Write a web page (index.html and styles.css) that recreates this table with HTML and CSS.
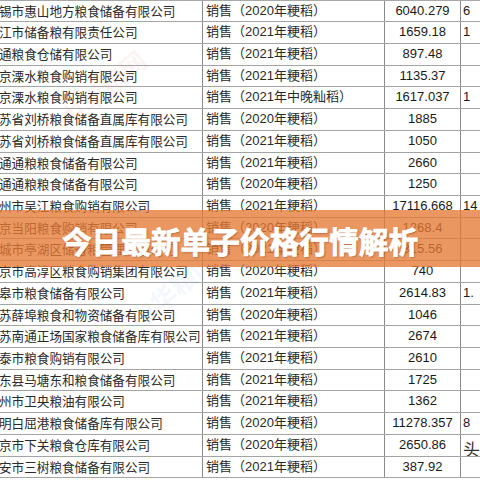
FILE: index.html
```html
<!DOCTYPE html>
<html lang="zh-CN">
<head>
<meta charset="utf-8">
<title>今日最新单子价格行情解析</title>
<link rel="stylesheet" href="styles.css">
</head>
<body>
<div class="page">
  <div class="sheet">
    <div class="row"><div class="c1">锡市惠山地方粮食储备有限公司</div><div class="c2">销售（2020年粳稻）</div><div class="c3">6040.279</div><div class="c4">6</div></div>
    <div class="row"><div class="c1">江市储备粮有限责任公司</div><div class="c2">销售（2021年粳稻）</div><div class="c3">1659.18</div><div class="c4">1</div></div>
    <div class="row"><div class="c1">通粮食仓储有限公司</div><div class="c2">销售（2021年粳稻）</div><div class="c3">897.48</div><div class="c4"></div></div>
    <div class="row"><div class="c1">京溧水粮食购销有限公司</div><div class="c2">销售（2021年粳稻）</div><div class="c3">1135.37</div><div class="c4"></div></div>
    <div class="row"><div class="c1">京溧水粮食购销有限公司</div><div class="c2">销售（2021年中晚籼稻）</div><div class="c3">1617.037</div><div class="c4">1</div></div>
    <div class="row"><div class="c1">苏省刘桥粮食储备直属库有限公司</div><div class="c2">销售（2020年粳稻）</div><div class="c3">1885</div><div class="c4"></div></div>
    <div class="row"><div class="c1">苏省刘桥粮食储备直属库有限公司</div><div class="c2">销售（2021年粳稻）</div><div class="c3">1050</div><div class="c4"></div></div>
    <div class="row"><div class="c1">通通粮粮食储备有限公司</div><div class="c2">销售（2021年粳稻）</div><div class="c3">2660</div><div class="c4"></div></div>
    <div class="row"><div class="c1">通通粮粮食储备有限公司</div><div class="c2">销售（2020年粳稻）</div><div class="c3">1250</div><div class="c4"></div></div>
    <div class="row"><div class="c1">州市吴江粮食购销有限公司</div><div class="c2">销售（2021年粳稻）</div><div class="c3">17116.668</div><div class="c4">14</div></div>
    <div class="row"><div class="c1">京当阳粮食购销有限公司</div><div class="c2">销售（2020年粳稻）</div><div class="c3">1268.4</div><div class="c4"></div></div>
    <div class="row"><div class="c1">城市亭湖区储备粮管理有限公司</div><div class="c2">销售（2021年粳稻）</div><div class="c3">315.56</div><div class="c4"></div></div>
    <div class="row"><div class="c1">京市高淳区粮食购销集团有限公司</div><div class="c2">销售（2020年粳稻）</div><div class="c3">740</div><div class="c4"></div></div>
    <div class="row"><div class="c1">皋市粮食储备有限公司</div><div class="c2">销售（2021年粳稻）</div><div class="c3">2614.83</div><div class="c4">1.</div></div>
    <div class="row"><div class="c1">苏薛埠粮食和物资储备有限公司</div><div class="c2">销售（2020年粳稻）</div><div class="c3">1046</div><div class="c4"></div></div>
    <div class="row"><div class="c1">苏南通正场国家粮食储备库有限公司</div><div class="c2">销售（2021年粳稻）</div><div class="c3">2674</div><div class="c4"></div></div>
    <div class="row"><div class="c1">泰市粮食购销有限公司</div><div class="c2">销售（2021年粳稻）</div><div class="c3">2610</div><div class="c4"></div></div>
    <div class="row"><div class="c1">东县马塘东和粮食储备有限公司</div><div class="c2">销售（2021年粳稻）</div><div class="c3">1725</div><div class="c4"></div></div>
    <div class="row"><div class="c1">州市卫央粮油有限公司</div><div class="c2">销售（2021年粳稻）</div><div class="c3">1362</div><div class="c4"></div></div>
    <div class="row"><div class="c1">明白屈港粮食储备库有限公司</div><div class="c2">销售（2020年粳稻）</div><div class="c3">11278.357</div><div class="c4">8</div></div>
    <div class="row"><div class="c1">京市下关粮食仓库有限公司</div><div class="c2">销售（2020年粳稻）</div><div class="c3">2650.86</div><div class="c4"><span class="mark">头条</span></div></div>
    <div class="row"><div class="c1">安市三树粮食储备有限公司</div><div class="c2">销售（2021年粳稻）</div><div class="c3">387.92</div><div class="c4"></div></div>
  </div>
  <div class="wm wm1">中华粮网</div>
  <div class="wm wm2">中华粮网</div>
  <div class="banner"><h1 class="title">今日最新单子价格行情解析</h1></div>
</div>
</body>
</html>
```
FILE: styles.css
```css
html, body {
  margin: 0;
  padding: 0;
  background: #ffffff;
}
body {
  width: 480px;
  height: 480px;
  overflow: hidden;
}
.page {
  position: relative;
  width: 480px;
  height: 480px;
  overflow: hidden;
  font-family: "Liberation Sans", "Noto Sans CJK SC", sans-serif;
  color: #1e1e1e;
}
.sheet {
  display: flex;
  flex-direction: column;
  border-top: 1px solid #a8a8a8;
  margin-top: -0.5px;
}
.row {
  display: grid;
  grid-template-columns: 203px 182px 76px 1fr;
  height: 21.73px;
  box-sizing: border-box;
  border-bottom: 1px solid #a4a4a4;
  font-size: 13px;
  line-height: 20.7px;
  white-space: nowrap;
}
.row > div {
  overflow: hidden;
}
.c1 {
  font-family: "Noto Sans CJK SC", sans-serif;
  font-size: 12.6px;
  color: #2a2a2a;
  margin-left: -1px;
  border-right: 1px solid #8a8a8a;
}
.c2 {
  padding-left: 3px;
  color: #2a2a2a;
  border-right: 1px solid #8a8a8a;
}
.c3 {
  text-align: center;
  color: #1a1a1a;
  border-right: 1px solid #8a8a8a;
}
.c4 {
  padding-left: 2px;
  color: #1a1a1a;
}
.mark {
  display: inline-block;
  font-family: "Noto Sans CJK SC", sans-serif;
  font-size: 17px;
  line-height: 20px;
  color: #333;
  margin-top: 4px;
}
.wm {
  position: absolute;
  font-family: "Noto Sans CJK SC", sans-serif;
  font-size: 26px;
  font-weight: 700;
  transform: rotate(-40deg);
  pointer-events: none;
}
.wm1 {
  left: 50px;
  top: 70px;
  color: rgba(220, 90, 80, 0.07);
}
.wm2 {
  left: 120px;
  top: 270px;
  color: rgba(90, 130, 210, 0.07);
}
.banner {
  position: absolute;
  left: 0;
  top: 210px;
  width: 480px;
  height: 57px;
  background: rgba(228, 122, 52, 0.78);
  display: flex;
  align-items: center;
  justify-content: center;
}
.title {
  margin: 0;
  padding-top: 5px;
  font-family: "Noto Sans CJK SC", sans-serif;
  font-size: 29.7px;
  font-weight: 700;
  line-height: 1;
  color: #ffffff;
  -webkit-text-stroke: 0.8px #ffffff;
  text-shadow: 1px 1px 2px rgba(80, 30, 0, 0.4);
}
```
